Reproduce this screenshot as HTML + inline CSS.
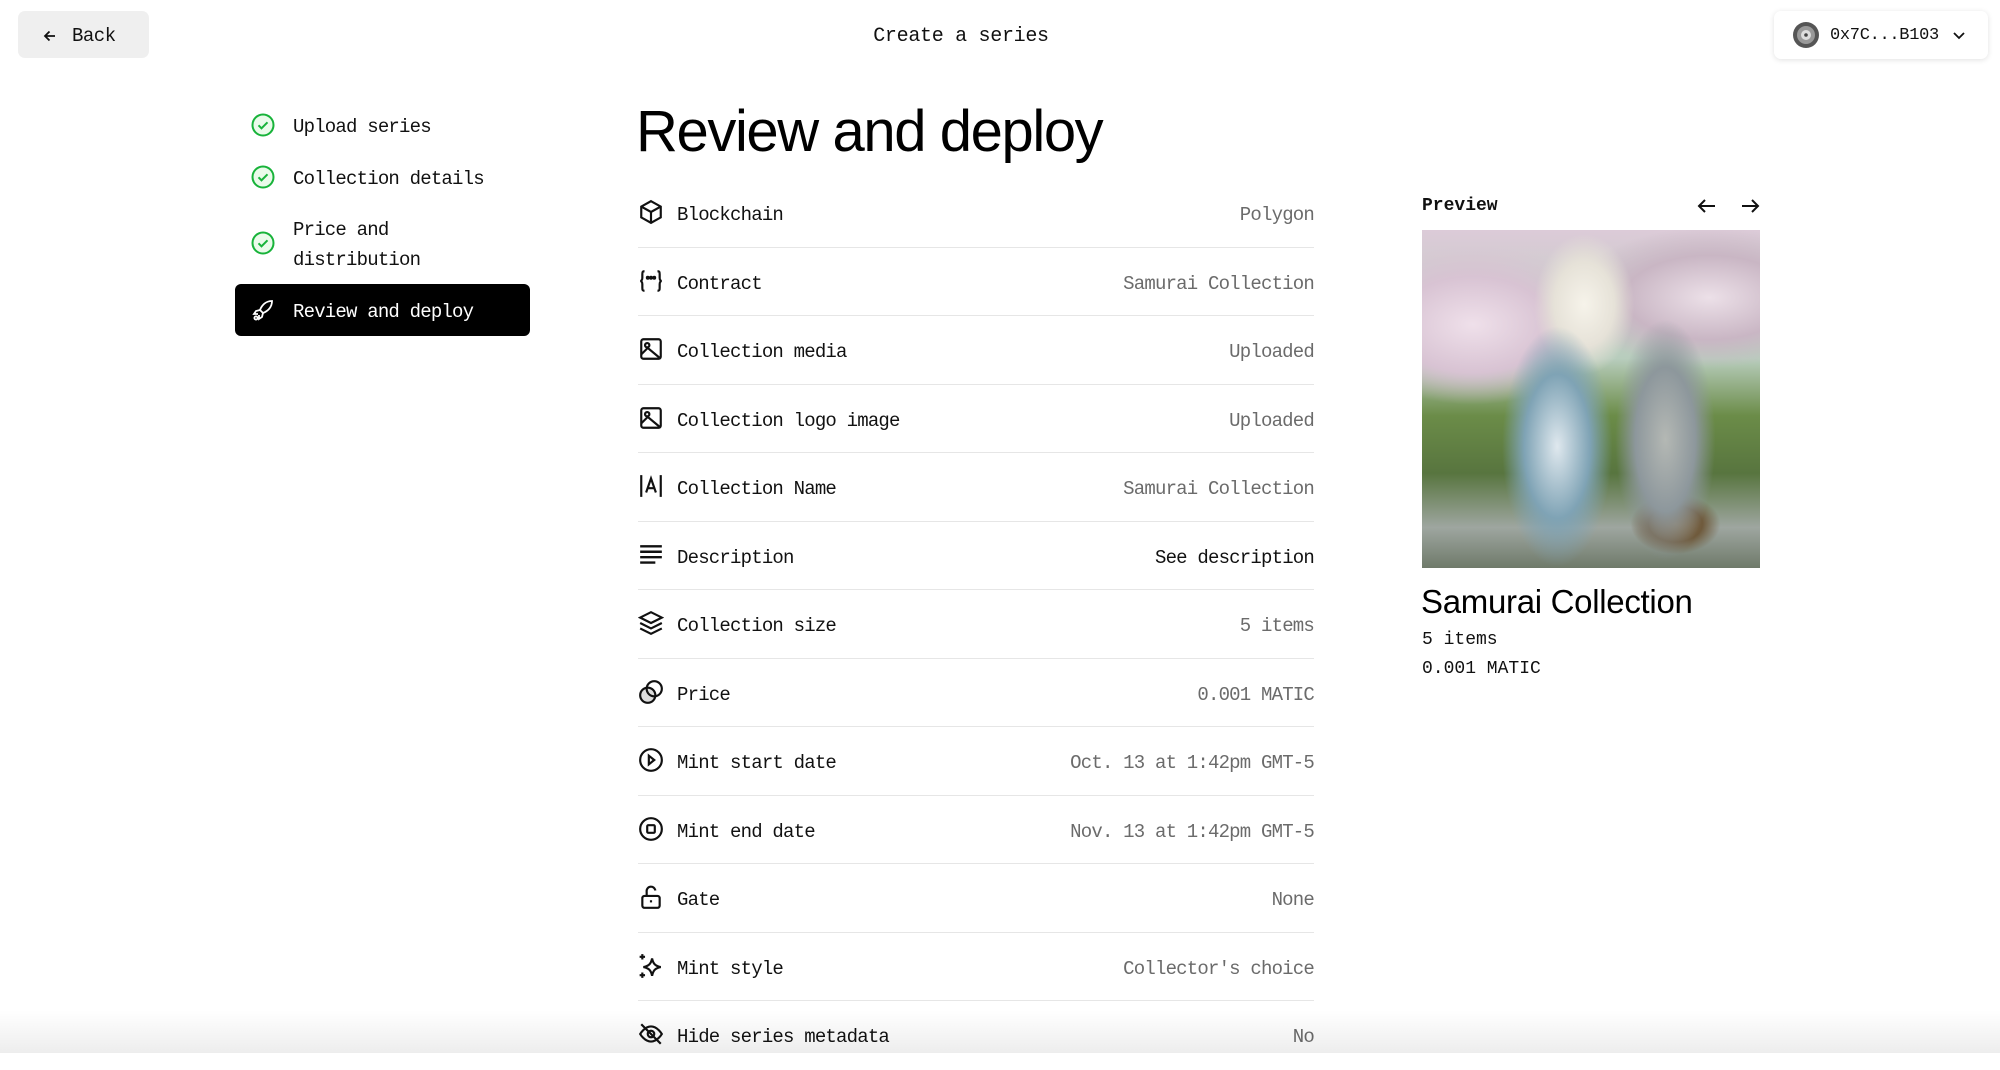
<!DOCTYPE html>
<html><head><meta charset="utf-8"><style>
*{box-sizing:border-box;margin:0;padding:0}
html,body{width:2000px;height:1053px;overflow:hidden;background:#fff;color:#111;font-family:"Liberation Mono",monospace}
.abs{position:absolute}
.mono{font-family:"Liberation Mono",monospace;font-size:19px;letter-spacing:-0.8px}
#back{left:18px;top:11px;width:131px;height:47px;background:#efefef;border-radius:7px;display:flex;align-items:center;padding-left:24px;font-size:19px;letter-spacing:-0.5px;padding-top:2px}
#title{left:0;width:1922px;top:25px;text-align:center;font-size:20px;letter-spacing:-0.3px}
#wallet{left:1774px;top:11px;width:214px;height:48px;background:#fff;border-radius:7px;box-shadow:0 1px 6px rgba(0,0,0,.12);display:flex;align-items:center;padding-left:18px;font-size:17px;letter-spacing:-0.3px}
.step{position:absolute;left:293px;line-height:30px}
.chk{position:absolute;left:251px;width:24px;height:24px}
#active{left:235px;top:284px;width:295px;height:52px;background:#000;border-radius:6px;color:#fff}
h1{position:absolute;left:636px;top:97px;font-family:"Liberation Sans",sans-serif;font-weight:500;font-size:58px;letter-spacing:-1.4px;line-height:70px;color:#000}
.row{position:absolute;left:638px;width:676px;height:68.5px;border-bottom:1.5px solid #e6e6e6}
.row svg{position:absolute;left:0;top:20px;width:26px;height:26px}
.row .l{position:absolute;left:39px;top:25px}
.row .v{position:absolute;right:0;top:25px;color:#6b6b6b}
#fade{left:0;top:1010px;width:2000px;height:43px;background:linear-gradient(to bottom,rgba(255,255,255,0),rgba(0,0,0,.07))}
</style></head><body>

<div id="back" class="abs"><svg width="16" height="16" viewBox="0 0 16 16" style="margin-right:14px"><path d="M13 8H3M7.5 3.5L3 8l4.5 4.5" stroke="#111" stroke-width="1.8" fill="none"/></svg>Back</div>
<div id="title" class="abs">Create a series</div>
<div id="wallet" class="abs"><svg width="28" height="28" viewBox="0 0 28 28" style="margin-right:10px"><circle cx="14" cy="14" r="13" fill="#555"/><circle cx="14" cy="14" r="9" fill="#999"/><circle cx="14" cy="14" r="5" fill="#ddd"/><circle cx="14" cy="14" r="1.8" fill="#444"/></svg>0x7C...B103<svg width="16" height="16" viewBox="0 0 16 16" style="margin-left:12px"><path d="M3 6l5 5 5-5" stroke="#111" stroke-width="1.8" fill="none"/></svg></div>

<svg class="chk" style="top:113px" viewBox="0 0 24 24"><circle cx="12" cy="12" r="10.5" fill="#eafbea" stroke="#18b33a" stroke-width="2"/><path d="M7.5 12.3l3 3 6-6" stroke="#18b33a" stroke-width="2" fill="none"/></svg>
<div class="step mono" style="top:112px">Upload series</div>
<svg class="chk" style="top:165px" viewBox="0 0 24 24"><circle cx="12" cy="12" r="10.5" fill="#eafbea" stroke="#18b33a" stroke-width="2"/><path d="M7.5 12.3l3 3 6-6" stroke="#18b33a" stroke-width="2" fill="none"/></svg>
<div class="step mono" style="top:164px">Collection details</div>
<svg class="chk" style="top:231px" viewBox="0 0 24 24"><circle cx="12" cy="12" r="10.5" fill="#eafbea" stroke="#18b33a" stroke-width="2"/><path d="M7.5 12.3l3 3 6-6" stroke="#18b33a" stroke-width="2" fill="none"/></svg>
<div class="step mono" style="top:215px">Price and<br>distribution</div>
<div id="active" class="abs"></div>
<svg class="abs" style="left:251px;top:298px" width="24" height="24" viewBox="0 0 24 24" fill="none" stroke="#fff" stroke-width="1.8"><path d="M21 3c-6 0-10 4-12 9l3 3c5-2 9-6 9-12z"/><path d="M9 12l-4 1-2 3 4 0M12 15l-1 4-3 2 0-4"/><circle cx="5" cy="20" r="1.6"/></svg>
<div class="step mono" style="top:297px;color:#fff">Review and deploy</div>

<h1>Review and deploy</h1>

<div class="row mono" style="top:179px"><svg viewBox="0 0 24 24" fill="none" stroke="#111" stroke-width="2"><path d="M12 2l9 5v10l-9 5-9-5V7z"/><path d="M3 7l9 5 9-5M12 12v10"/></svg><span class="l">Blockchain</span><span class="v">Polygon</span></div>
<div class="row mono" style="top:247.5px"><svg viewBox="0 0 24 24" fill="none" stroke="#111" stroke-width="2"><path d="M6 3C4 3 4 4 4 6v3c0 2-1 3-2 3 1 0 2 1 2 3v3c0 2 0 3 2 3M18 3c2 0 2 1 2 3v3c0 2 1 3 2 3-1 0-2 1-2 3v3c0 2 0 3-2 3"/><circle cx="9" cy="9" r=".8" fill="#111"/><circle cx="12" cy="9" r=".8" fill="#111"/><circle cx="15" cy="9" r=".8" fill="#111"/></svg><span class="l">Contract</span><span class="v">Samurai Collection</span></div>
<div class="row mono" style="top:316px"><svg viewBox="0 0 24 24" fill="none" stroke="#111" stroke-width="2"><rect x="3" y="3" width="18" height="18" rx="2"/><circle cx="8.5" cy="8.5" r="2"/><path d="M3 17l6-6 12 10" /></svg><span class="l">Collection media</span><span class="v">Uploaded</span></div>
<div class="row mono" style="top:384.5px"><svg viewBox="0 0 24 24" fill="none" stroke="#111" stroke-width="2"><rect x="3" y="3" width="18" height="18" rx="2"/><circle cx="8.5" cy="8.5" r="2"/><path d="M3 17l6-6 12 10"/></svg><span class="l">Collection logo image</span><span class="v">Uploaded</span></div>
<div class="row mono" style="top:453px"><svg viewBox="0 0 24 24" fill="none" stroke="#111" stroke-width="2"><path d="M3 2v20M21 2v20M7.5 18l4.5-13 4.5 13M9 14h6"/></svg><span class="l">Collection Name</span><span class="v">Samurai Collection</span></div>
<div class="row mono" style="top:521.5px"><svg viewBox="0 0 24 24" fill="none" stroke="#111" stroke-width="2.2"><path d="M2 4h20M2 9h20M2 14h20M2 19h14"/></svg><span class="l">Description</span><span class="v" style="color:#111">See description</span></div>
<div class="row mono" style="top:590px"><svg viewBox="0 0 24 24" fill="none" stroke="#111" stroke-width="2"><path d="M12 2l10 5-10 5L2 7z"/><path d="M2 12l10 5 10-5M2 17l10 5 10-5"/></svg><span class="l">Collection size</span><span class="v">5 items</span></div>
<div class="row mono" style="top:658.5px"><svg viewBox="0 0 24 24" fill="none" stroke="#111" stroke-width="2"><circle cx="9" cy="15" r="7" fill="#ddd"/><circle cx="15" cy="9" r="7"/></svg><span class="l">Price</span><span class="v">0.001 MATIC</span></div>
<div class="row mono" style="top:727px"><svg viewBox="0 0 24 24" fill="none" stroke="#111" stroke-width="2"><circle cx="12" cy="12" r="10"/><path d="M10 8l5 4-5 4z"/></svg><span class="l">Mint start date</span><span class="v">Oct. 13 at 1:42pm GMT-5</span></div>
<div class="row mono" style="top:795.5px"><svg viewBox="0 0 24 24" fill="none" stroke="#111" stroke-width="2"><circle cx="12" cy="12" r="10"/><rect x="8.5" y="8.5" width="7" height="7" rx="1"/></svg><span class="l">Mint end date</span><span class="v">Nov. 13 at 1:42pm GMT-5</span></div>
<div class="row mono" style="top:864px"><svg viewBox="0 0 24 24" fill="none" stroke="#111" stroke-width="2"><rect x="4" y="11" width="16" height="11" rx="2"/><path d="M8 11V7a4 4 0 0 1 8-1"/><path d="M12 15v2"/></svg><span class="l">Gate</span><span class="v">None</span></div>
<div class="row mono" style="top:932.5px"><svg viewBox="0 0 24 24" fill="none" stroke="#111" stroke-width="2"><path d="M13 5c1 5 3 7 8 8-5 1-7 3-8 8-1-5-3-7-8-8 5-1 7-3 8-8z"/><path d="M4 1v5M1.5 3.5h5M4 18v5M1.5 20.5h5"/></svg><span class="l">Mint style</span><span class="v">Collector's choice</span></div>
<div class="row mono" style="top:1001px;border:none"><svg viewBox="0 0 24 24" fill="none" stroke="#111" stroke-width="2"><path d="M2 12s4-7 10-7 10 7 10 7-4 7-10 7S2 12 2 12z"/><circle cx="12" cy="12" r="3"/><path d="M3 3l18 18"/></svg><span class="l">Hide series metadata</span><span class="v">No</span></div>

<div class="abs mono" style="left:1422px;top:196px;font-weight:bold;font-size:18px;letter-spacing:0">Preview</div>
<svg class="abs" style="left:1696px;top:195px" width="22" height="22" viewBox="0 0 22 22" fill="none" stroke="#111" stroke-width="2"><path d="M19 11H3M9 5l-6 6 6 6"/></svg>
<svg class="abs" style="left:1739px;top:195px" width="22" height="22" viewBox="0 0 22 22" fill="none" stroke="#111" stroke-width="2"><path d="M3 11h16M13 5l6 6-6 6"/></svg>

<div class="abs" style="left:1422px;top:230px;width:338px;height:338px;overflow:hidden;background:
radial-gradient(ellipse 50px 120px at 72% 62%,#b4b8b4 0,#8d979c 60%,transparent 100%),
radial-gradient(ellipse 45px 30px at 75% 87%,#8a7350 0,#6f5a3c 60%,transparent 100%),
radial-gradient(ellipse 55px 120px at 40% 64%,#dfe8ee 0,#7fa3b5 60%,transparent 100%),
radial-gradient(ellipse 50px 70px at 48% 22%,#f6f3ea 0,#e6e2d8 60%,transparent 100%),
radial-gradient(ellipse 130px 80px at 15% 28%,#efe0ea 0,#d8c3d3 60%,transparent 100%),
radial-gradient(ellipse 140px 70px at 85% 20%,#ece0e8 0,#c9b6c4 60%,transparent 100%),
linear-gradient(to bottom,#dccbd8 0,#b8cdbd 38%,#6b8c48 55%,#58753f 72%,#9ea6a0 88%,#6f7a6a 100%)"></div>

<div class="abs" style="left:1421px;top:583px;font-family:'Liberation Sans',sans-serif;font-size:33px;font-weight:500;letter-spacing:-0.3px;color:#000">Samurai Collection</div>
<div class="abs" style="left:1422px;top:630px;font-size:18px">5 items</div>
<div class="abs" style="left:1422px;top:659px;font-size:18px">0.001 MATIC</div>

<div id="fade" class="abs"></div>
</body></html>
